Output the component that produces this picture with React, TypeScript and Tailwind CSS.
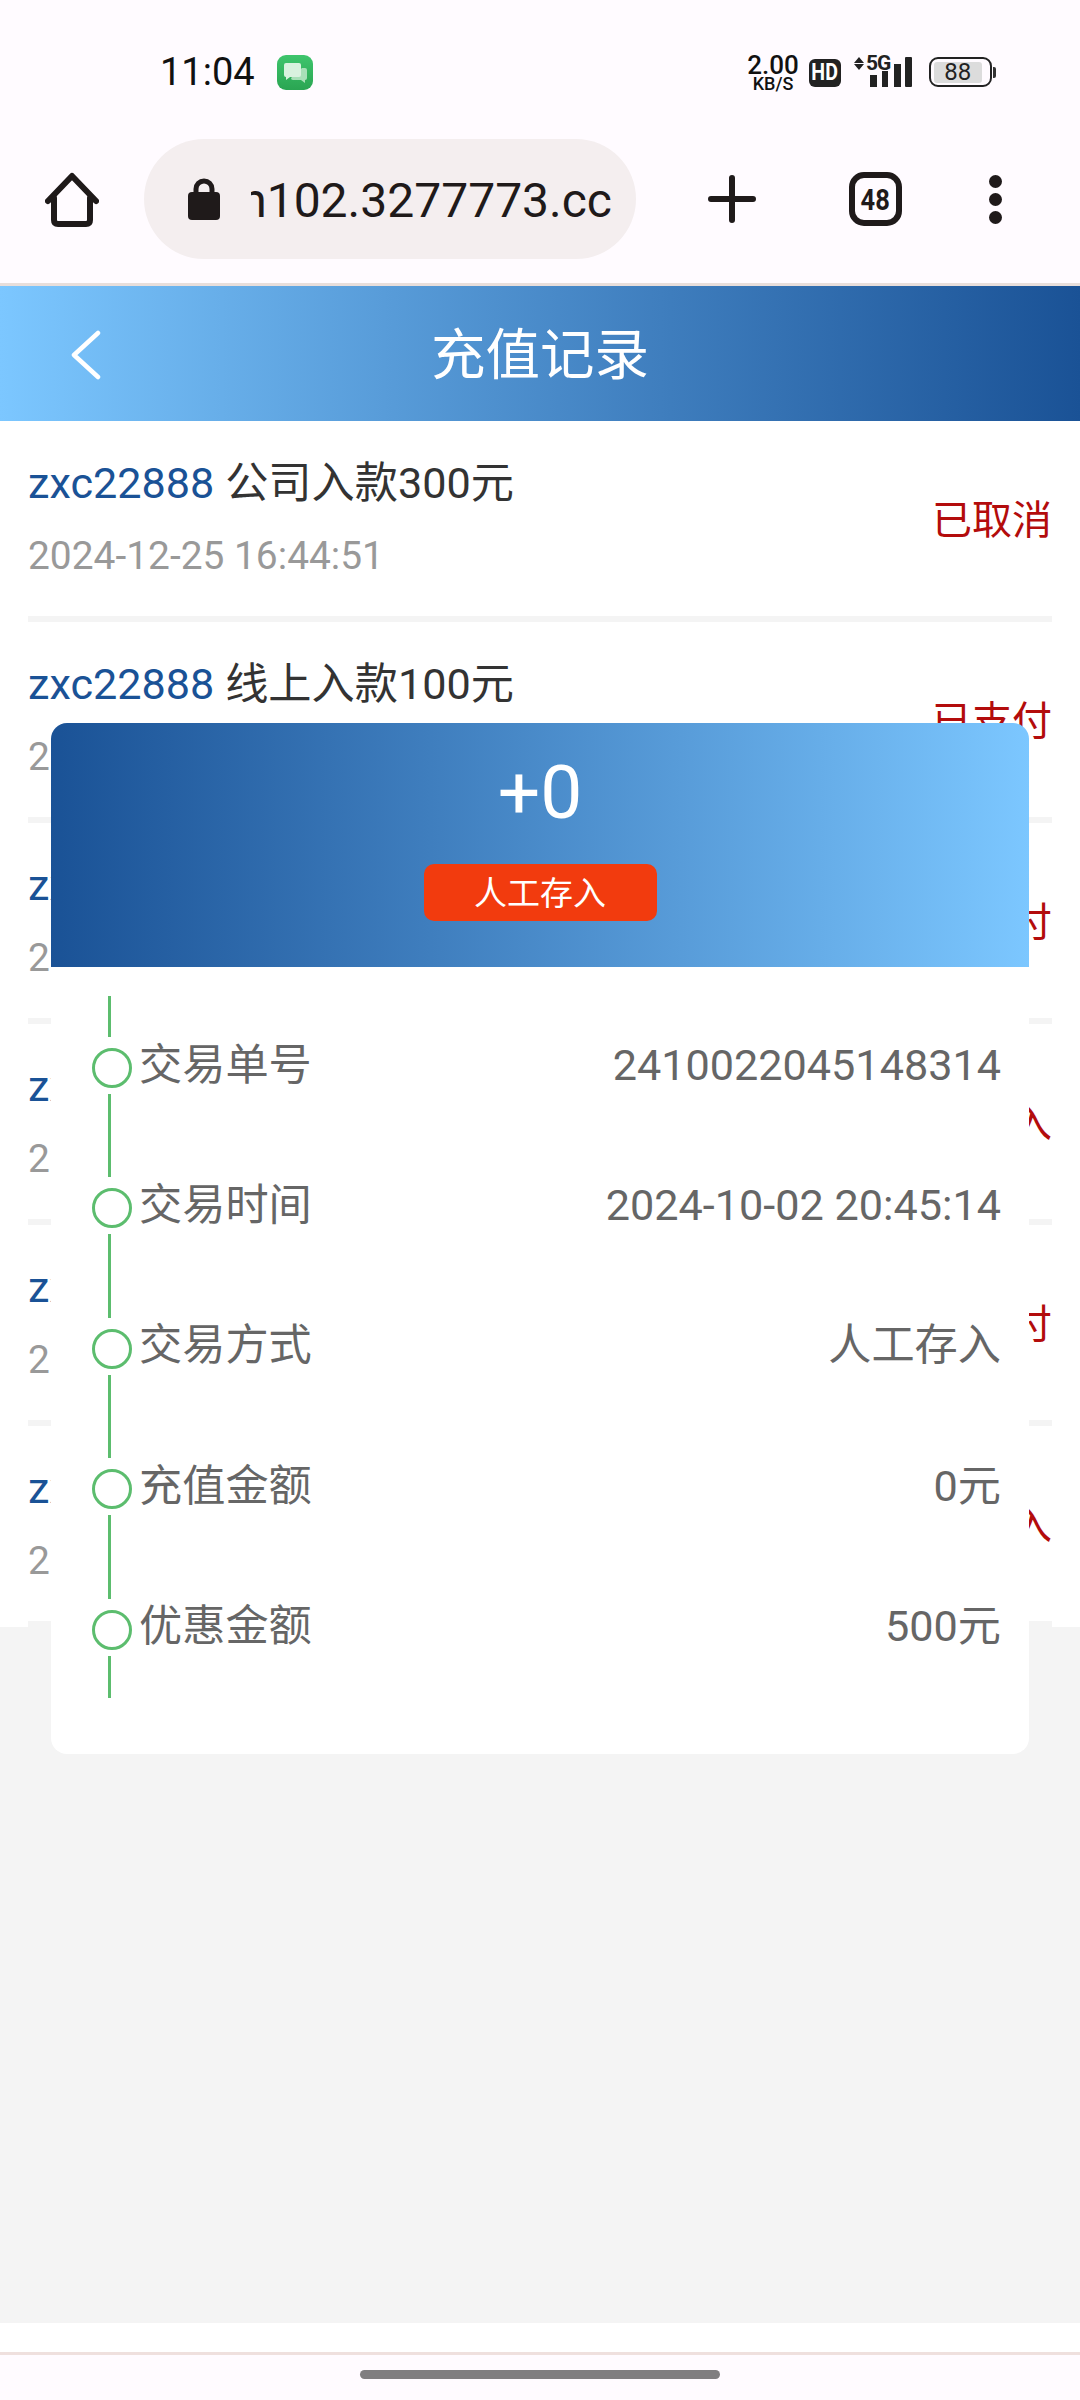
const rows = [
  { title: '公司入款300元', date: '2024-12-25 16:44:51', status: '已取消' },
  { title: '线上入款100元', date: '2024-12-25 16:40:12', status: '已支付' },
  { title: '线上入款100元', date: '2024-12-20 13:21:08', status: '已支付' },
  { title: '人工存入500元', date: '2024-12-18 10:02:37', status: '已存入' },
  { title: '线上入款200元', date: '2024-11-03 19:15:46', status: '已支付' },
  { title: '人工存入0元', date: '2024-10-02 20:45:14', status: '已存入' },
];

const details = [
  { label: '交易单号', value: '2410022045148314' },
  { label: '交易时间', value: '2024-10-02 20:45:14' },
  { label: '交易方式', value: '人工存入' },
  { label: '充值金额', value: '0元' },
  { label: '优惠金额', value: '500元' },
];

function StatusBar() {
  return (
    <div className="flex items-start h-[35px] mt-[55px] pl-[160px] pr-[84px]">
      <span className="text-[38px] leading-[35px] text-[#111] w-[117px]">11:04</span>
      <svg width="36" height="35" viewBox="0 0 36 35">
        <defs>
          <linearGradient id="chat" x1="0" y1="0" x2="0" y2="1">
            <stop offset="0" stopColor="#3fc56d" />
            <stop offset="1" stopColor="#2aa552" />
          </linearGradient>
        </defs>
        <rect width="36" height="35" rx="9" fill="url(#chat)" />
        <path d="M25 13h3a2 2 0 0 1 2 2v8a2 2 0 0 1-2 2v3l-4-3h-8a2 2 0 0 1-2-2z" fill="#a8e0b8" />
        <path d="M9 8h13a2 2 0 0 1 2 2v10a2 2 0 0 1-2 2h-9l-4 3v-3a2 2 0 0 1-2-2V10a2 2 0 0 1 2-2z" fill="#d9f2df" />
      </svg>
      <div className="ml-auto flex items-start">
        <div className="flex flex-col items-center w-[52px] font-medium text-[#111]">
          <span className="text-[26px] leading-[22px] mt-[-1px]">2.00</span>
          <span className="text-[18px] leading-[14px] mt-[1px]">KB/S</span>
        </div>
        <div className="ml-[10px] mt-[4px] w-[32px] h-[28px] rounded-[6px] bg-[#222] text-white text-[23px] leading-[28px] font-bold text-center">
          <span className="inline-block scale-x-85">HD</span>
        </div>
        <div className="relative ml-[13px] w-[58px] h-[32px]">
          <svg width="58" height="32" viewBox="0 0 58 32" className="text-[#222]">
            <path d="M0 8 5 2l5 6zM0 9l5 6 5-6z" fill="currentColor" />
            <rect x="16" y="20" width="7" height="12" fill="currentColor" />
            <rect x="28" y="16" width="6" height="16" fill="currentColor" />
            <rect x="40" y="9" width="7" height="23" fill="currentColor" />
            <rect x="51" y="2" width="7" height="30" rx="1" fill="currentColor" />
          </svg>
          <span className="absolute left-[12px] top-[-3px] text-[21px] leading-[22px] font-bold text-[#222] tracking-[-1px]">5G</span>
        </div>
        <div className="ml-[17px] mt-[2px] flex items-center">
          <div className="w-[63px] h-[30px] rounded-[9px] border-[2.5px] border-[#222] p-[2.5px] pr-[8px]">
            <div className="h-full rounded-[3px] bg-[#dcdcdc] text-[24px] leading-[20px] text-center text-[#222]">88</div>
          </div>
          <div className="ml-[1px] w-[3px] h-[11px] rounded-r-[2px] bg-[#333]" />
        </div>
      </div>
    </div>
  );
}

function BrowserBar() {
  return (
    <div className="flex items-center h-[120px] mt-[49px] pl-[45px]">
      <svg width="54" height="55" viewBox="0 0 54 55" fill="none" stroke="#1f1a1a" strokeWidth="6" strokeLinecap="round" strokeLinejoin="round">
        <path d="M3 29 27 4l24 25" />
        <path d="M9 26v22q0 4 4 4h28q4 0 4-4V26" />
      </svg>
      <div className="ml-[45px] flex items-center w-[492px] h-[120px] rounded-full bg-[#f4eeef] pl-[44px]">
        <svg width="32" height="42" viewBox="0 0 32 42">
          <path d="M8 16V11a8 8 0 0 1 16 0v5" fill="none" stroke="#1f1a1a" strokeWidth="5" />
          <rect y="14" width="32" height="28" rx="4" fill="#1f1a1a" />
        </svg>
        <div className="ml-[31px] w-[361px] overflow-hidden flex justify-end">
          <span className="text-[48px] leading-[60px] pt-[3px] text-[#1f1a1a] whitespace-nowrap">n102.3277773.cc</span>
        </div>
      </div>
      <svg className="ml-[72px]" width="48" height="48" viewBox="0 0 48 48" stroke="#1f1a1a" strokeWidth="6" strokeLinecap="round">
        <path d="M3 24h42M24 3v42" />
      </svg>
      <div className="ml-[93px] w-[53px] h-[54px] rounded-[15px] border-[6px] border-[#1f1a1a] flex items-center justify-center text-[30px] font-bold text-[#1f1a1a]">
        <span className="inline-block scale-x-85">48</span>
      </div>
      <svg className="ml-[87px]" width="13" height="49" viewBox="0 0 13 49" fill="#1f1a1a">
        <circle cx="6.5" cy="6.5" r="6.5" />
        <circle cx="6.5" cy="24.5" r="6.5" />
        <circle cx="6.5" cy="42.5" r="6.5" />
      </svg>
    </div>
  );
}

function RecordModal() {
  return (
    <div className="absolute left-[51px] top-[723px] w-[978px]">
      <div className="h-[244px] rounded-t-[16px] bg-gradient-to-r from-[#1a5296] to-[#7cc7ff] flex flex-col items-center pt-[29px]">
        <div className="text-[75px] leading-[80px] text-white">+0</div>
        <div className="mt-[32px] w-[233px] h-[57px] rounded-[10px] bg-[#f23b0e] text-white text-[33px] leading-[59px] text-center">人工存入</div>
      </div>
      <div className="h-[787px] bg-white rounded-b-[16px] pt-[29px] pl-[41px] pr-[28px]">
        {details.map((d) => (
          <div key={d.label} className="flex items-center h-[140.4px]">
            <div className="flex flex-col w-[40px] h-full">
              <div className="ml-[16px] w-[3px] h-[41px] bg-[#5cbd6e]" />
              <div className="mt-[11px] w-[40px] h-[40px] rounded-full border-[3px] border-[#5cbd6e]" />
              <div className="ml-[16px] mt-[6px] w-[3px] flex-1 bg-[#5cbd6e]" />
            </div>
            <span className="ml-[7px] mb-[1px] text-[43.2px] leading-[60px] text-[#666]">{d.label}</span>
            <span className="ml-auto mb-[1px] text-[43.2px] leading-[60px] text-[#666]">{d.value}</span>
          </div>
        ))}
      </div>
    </div>
  );
}

export default function App() {
  return (
    <div className="relative h-[2400px] flex flex-col overflow-hidden bg-[#f4f4f4] font-[Roboto,'Noto_Sans_CJK_SC',sans-serif]">
      <div className="h-[286px] bg-[#fffbff] border-b-[3px] border-[#e8dedb]">
        <StatusBar />
        <BrowserBar />
      </div>

      <div className="grid grid-cols-[1fr_auto_1fr] items-center h-[135px] pt-[2px] bg-gradient-to-r from-[#7cc7ff] to-[#1a5296]">
        <svg className="ml-[71px]" width="30" height="50" viewBox="0 0 30 50" fill="none" stroke="#fff" strokeWidth="4.5" strokeLinecap="round" strokeLinejoin="round">
          <path d="M27 3 3 25l24 22" />
        </svg>
        <span className="text-[54.5px] leading-[60px] text-white">充值记录</span>
      </div>

      <div className="bg-white px-[28px]">
        {rows.map((r, i) => (
          <div key={i} className="flex items-center justify-between h-[201px] border-b-[6px] border-[#f4f4f4] pt-[2px]">
            <div>
              <div className="text-[43.2px] leading-[60px] text-[#333]">
                <span className="text-[#1a5296]">zxc22888</span> {r.title}
              </div>
              <div className="mt-[12px] text-[38.9px] leading-[60px] text-[#999]">{r.date}</div>
            </div>
            <span className="mt-[2px] text-[40px] leading-[60px] text-[#b30c0c]">{r.status}</span>
          </div>
        ))}
      </div>

      <div className="mt-auto h-[29px] bg-white" />
      <div className="h-[48px] bg-[#fffbff] border-t-[3px] border-[#efe0de] flex justify-center pt-[15px]">
        <div className="w-[360px] h-[9px] rounded-full bg-[#807e80]" />
      </div>

      <RecordModal />
    </div>
  );
}
